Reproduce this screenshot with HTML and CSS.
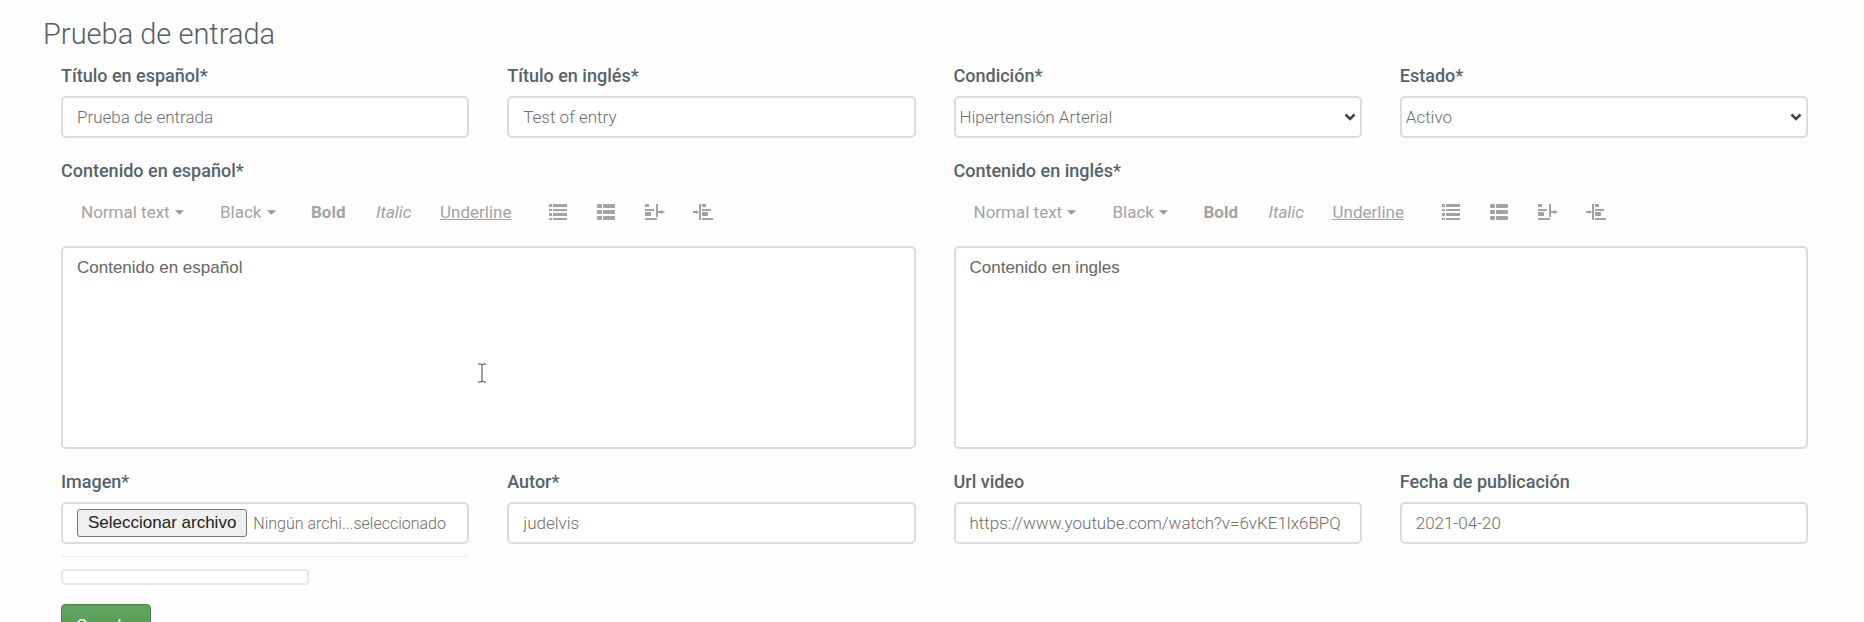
FILE: index.html
```html
<!DOCTYPE html>
<html lang="es">
<head>
<meta charset="utf-8">
<meta name="viewport" content="width=device-width, initial-scale=1">
<title>Prueba de entrada</title>
<link rel="stylesheet" href="styles.css">
</head>
<body>
<svg class="sprite" aria-hidden="true">
  <symbol id="icon-list" viewBox="0 0 18 16">
    <path d="M0 0h3v3H0zM4 0h14v3H4zM0 5h3v2H0zM4 5h14v2H4zM0 9h3v3H0zM4 9h14v3H4zM0 14h3v2H0zM4 14h14v2H4z"/>
  </symbol>
  <symbol id="icon-blocks" viewBox="0 0 18 16">
    <rect x="0" y="0" width="5" height="4" rx="1"/><rect x="6" y="0" width="12" height="4" rx="1"/>
    <rect x="0" y="6" width="5" height="4" rx="1"/><rect x="6" y="6" width="12" height="4" rx="1"/>
    <rect x="0" y="12" width="5" height="4" rx="1"/><rect x="6" y="12" width="12" height="4" rx="1"/>
  </symbol>
  <symbol id="icon-outdent" viewBox="0 0 20 16">
    <path d="M0 0h4v3H0zM0 5h9v2H0zM0 8h6v4H0zM0 14h12v2H0zM11 0h2v13h-2zM13 7h3V6l4 2-4 2V9h-3z"/>
  </symbol>
  <symbol id="icon-indent" viewBox="0 0 20 16">
    <path d="M0 7h3V6l3 2-3 2V9H0zM6 0h2v16H6zM9 0h4v3H9zM9 5h9v2H9zM9 8h6v4H9zM9 14h11v2H9z"/>
  </symbol>
  <symbol id="icon-caret" viewBox="0 0 10 5"><path d="M0 0h10L5 5z"/></symbol>
  <symbol id="icon-chevron" viewBox="0 0 12 8">
    <path d="M1.500 1.500 6 6l4.500-4.500" fill="none" stroke="#444" stroke-width="2.600"/>
  </symbol>
</svg>

<main class="page">
  <h1 class="title">Prueba de entrada</h1>
  <form class="form">
    <div class="field">
      <label class="label" for="title-es">Título en español*</label>
      <input class="control" id="title-es" type="text" value="Prueba de entrada">
    </div>
    <div class="field">
      <label class="label" for="title-en">Título en inglés*</label>
      <input class="control" id="title-en" type="text" value="Test of entry">
    </div>
    <div class="field">
      <label class="label" for="condition">Condición*</label>
      <div class="select">
        <select class="control" id="condition"><option>Hipertensión Arterial</option></select>
        <svg class="chevron" aria-hidden="true"><use href="#icon-chevron"/></svg>
      </div>
    </div>
    <div class="field">
      <label class="label" for="status">Estado*</label>
      <div class="select">
        <select class="control" id="status"><option>Activo</option></select>
        <svg class="chevron" aria-hidden="true"><use href="#icon-chevron"/></svg>
      </div>
    </div>

    <div class="field wide">
      <label class="label" for="content-es">Contenido en español*</label>
      <div class="toolbar">
        <button type="button" class="tool">Normal text <svg class="caret"><use href="#icon-caret"/></svg></button>
        <button type="button" class="tool">Black <svg class="caret"><use href="#icon-caret"/></svg></button>
        <button type="button" class="tool bold">Bold</button>
        <button type="button" class="tool italic">Italic</button>
        <button type="button" class="tool underline">Underline</button>
        <button type="button" class="tool" aria-label="Unordered list"><svg class="icon"><use href="#icon-list"/></svg></button>
        <button type="button" class="tool" aria-label="Ordered list"><svg class="icon"><use href="#icon-blocks"/></svg></button>
        <button type="button" class="tool" aria-label="Outdent"><svg class="icon large"><use href="#icon-outdent"/></svg></button>
        <button type="button" class="tool" aria-label="Indent"><svg class="icon large"><use href="#icon-indent"/></svg></button>
      </div>
      <div class="editor-wrap">
        <textarea class="control editor" id="content-es">Contenido en español</textarea>
        <svg class="pointer" viewBox="0 0 10 20" aria-hidden="true"><path d="M1 1h3l1 1 1-1h3M5 2v16M1 19h3l1-1 1 1h3"/></svg>
      </div>
    </div>
    <div class="field wide">
      <label class="label" for="content-en">Contenido en inglés*</label>
      <div class="toolbar">
        <button type="button" class="tool">Normal text <svg class="caret"><use href="#icon-caret"/></svg></button>
        <button type="button" class="tool">Black <svg class="caret"><use href="#icon-caret"/></svg></button>
        <button type="button" class="tool bold">Bold</button>
        <button type="button" class="tool italic">Italic</button>
        <button type="button" class="tool underline">Underline</button>
        <button type="button" class="tool" aria-label="Unordered list"><svg class="icon"><use href="#icon-list"/></svg></button>
        <button type="button" class="tool" aria-label="Ordered list"><svg class="icon"><use href="#icon-blocks"/></svg></button>
        <button type="button" class="tool" aria-label="Outdent"><svg class="icon large"><use href="#icon-outdent"/></svg></button>
        <button type="button" class="tool" aria-label="Indent"><svg class="icon large"><use href="#icon-indent"/></svg></button>
      </div>
      <textarea class="control editor" id="content-en">Contenido en ingles</textarea>
    </div>

    <div class="field">
      <label class="label" for="image">Imagen*</label>
      <div class="control file">
        <input class="file-input" id="image" type="file">
        <span class="file-button">Seleccionar archivo</span>
        <span class="file-name">Ningún archi...seleccionado</span>
      </div>
      <hr class="rule">
      <div class="preview"></div>
    </div>
    <div class="field">
      <label class="label" for="author">Autor*</label>
      <input class="control" id="author" type="text" value="judelvis">
    </div>
    <div class="field">
      <label class="label" for="video">Url video</label>
      <input class="control" id="video" type="text" value="https://www.youtube.com/watch?v=6vKE1lx6BPQ">
    </div>
    <div class="field">
      <label class="label" for="date">Fecha de publicación</label>
      <input class="control" id="date" type="text" value="2021-04-20">
    </div>

    <div class="actions"><button class="save" type="submit">Guardar</button></div>
  </form>
</main>
</body>
</html>
```

FILE: styles.css
```css
* { box-sizing: border-box; }

html { scrollbar-width: none; }

body {
  margin: 0;
  background: #fefefe;
  color: #55595c;
  font-family: Roboto, "Noto Sans", sans-serif;
  font-size: 17px;
}

.sprite { position: absolute; width: 0; height: 0; }

.page { padding: 16px 56px 24px 43px; }

.title {
  margin: 0 0 10px;
  color: #566064;
  font-size: 29px;
  font-weight: 300;
  line-height: 36px;
}

.form {
  display: grid;
  grid-template-columns: repeat(4, minmax(0, 1fr));
  column-gap: 38px;
  row-gap: 19px;
  padding-left: 18px;
}

.field { display: flex; flex-direction: column; min-width: 0; }
.wide { grid-column: span 2; }

.label {
  margin-bottom: 6px;
  color: #56636a;
  font-size: 18px;
  font-weight: 500;
  line-height: 28px;
}

.control {
  width: 100%;
  height: 42px;
  padding: 0 14px;
  border: 2px solid #dcdcdc;
  border-radius: 5px;
  background: #fff;
  color: #6e6e6e;
  font: inherit;
  font-weight: 300;
}

.select { display: grid; align-items: center; }
.select > * { grid-area: 1 / 1; }
.select .control { padding: 0 28px 0 4px; appearance: none; }

.chevron {
  width: 12px;
  height: 8px;
  margin-right: 6px;
  justify-self: end;
  pointer-events: none;
}

.toolbar {
  display: grid;
  grid-template-columns: 139px 91px 65px 64px 109px 48px 48px 48px 48px;
  align-items: center;
  height: 32px;
  margin: 5px 0 18px;
  padding-left: 20px;
}

.tool {
  display: flex;
  align-items: center;
  gap: 5px;
  padding: 0;
  border: 0;
  background: none;
  color: #a3a3a3;
  font: inherit;
  white-space: nowrap;
}

.tool.bold { font-weight: 700; }
.tool.italic { font-style: italic; }
.tool.underline { text-decoration: underline; }
.caret { width: 9px; height: 5px; fill: #999; }
.icon { width: 18px; height: 16px; fill: #a3a3a3; }
.large { width: 20px; }

.editor-wrap { position: relative; display: flex; }

.editor {
  height: 203px;
  padding: 8px 14px;
  color: #666;
  font-family: "Liberation Sans", Arial, sans-serif;
  font-weight: 400;
  line-height: 24px;
  resize: none;
}

.pointer {
  position: absolute;
  top: 117px;
  left: 416px;
  width: 10px;
  height: 20px;
  fill: none;
  stroke: #444;
}

.file {
  position: relative;
  display: flex;
  align-items: center;
  gap: 6px;
}

.file-input {
  position: absolute;
  inset: 0;
  width: 100%;
  opacity: 0;
}

.file-button {
  padding: 0 10px;
  border: 1px solid #777;
  border-radius: 3px;
  background: #efefef;
  color: #222;
  font: 17px/26px "Liberation Sans", Arial, sans-serif;
  white-space: nowrap;
}

.file-name { white-space: nowrap; font-size: 16px; }

.rule {
  width: 100%;
  margin: 12px 0;
  border: 0;
  border-top: 1px solid #eee;
}

.preview {
  width: 248px;
  max-width: 100%;
  height: 16px;
  border: 2px solid #e8e8e8;
  border-radius: 4px;
}

.actions { grid-column: 1 / -1; }

.save {
  height: 42px;
  padding: 0 14px;
  border: 1px solid #4b7f4b;
  border-radius: 4px;
  background: linear-gradient(#62a560, #4f984d);
  color: #fff;
  font: inherit;
}
```
